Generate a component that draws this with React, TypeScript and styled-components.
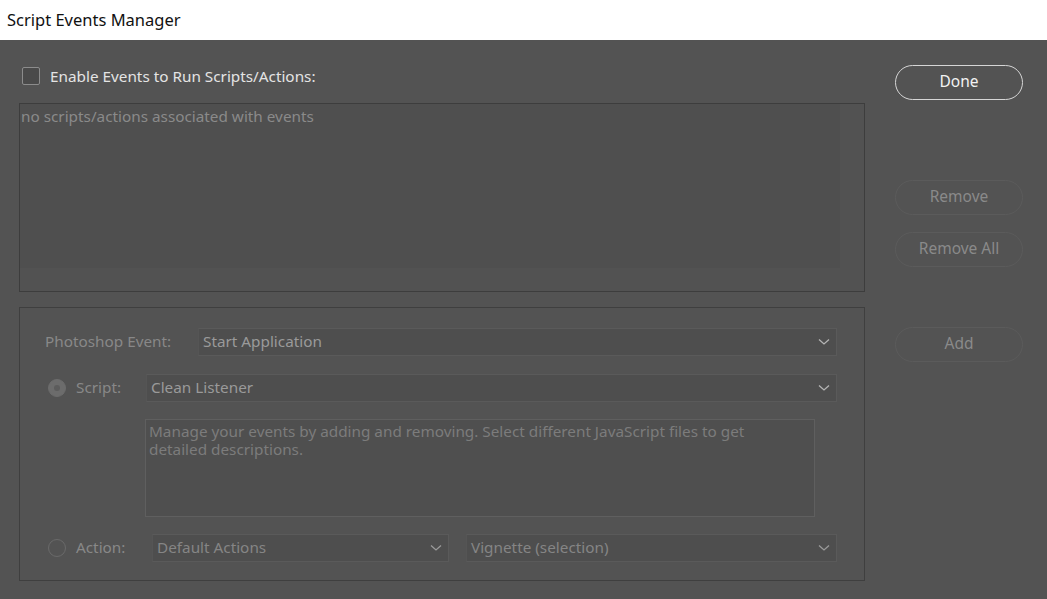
import { ReactNode } from "react";
import styled, { createGlobalStyle } from "styled-components";

const GlobalStyle = createGlobalStyle`
    html, body {
        margin: 0;
        padding: 0;
        background: #535353;
    }
    body {
        font-family: "Noto Sans", "Open Sans", sans-serif;
    }
`

const Window = styled.div`
    width: 1047px;
    height: 599px;
    display: flex;
    flex-direction: column;
    overflow: hidden;
`

const TitleBar = styled.div`
    height: 40px;
    flex: none;
    background: #ffffff;
    color: #111111;
    font-size: 16.5px;
    display: flex;
    align-items: center;
    padding-left: 7px;
    padding-bottom: 2px;
    box-sizing: border-box;
`

const Body = styled.div`
    flex: 1;
    display: flex;
    background: #535353;
    padding: 24px 0 0 19px;
`

const MainColumn = styled.div`
    width: 846px;
    display: flex;
    flex-direction: column;
`

const SideColumn = styled.div`
    width: 128px;
    margin-left: 30px;
    padding-top: 1px;
    display: flex;
    flex-direction: column;
`

const CheckRow = styled.label`
    height: 24px;
    display: flex;
    align-items: center;
    gap: 10px;
    padding-left: 3px;
    color: #e4e4e4;
    font-size: 15.3px;
    margin-bottom: 15px;
`

const CheckBox = styled.span`
    width: 16px;
    height: 16px;
    border: 1.5px solid #8c8c8c;
    border-radius: 2px;
    background: #4a4a4a;
`

const ListBox = styled.div`
    height: 189px;
    box-sizing: border-box;
    border: 1px solid #3d3d3d;
    background: #4f4f4f;
    display: grid;
    grid-template-columns: 1fr 24px;
    grid-template-rows: 1fr 23px;
`

const ListText = styled.div`
    color: #8a8a8a;
    font-size: 15.3px;
    padding: 2px 0 0 1px;
`

const ScrollStrip = styled.div<{ $wide?: boolean }>`
    background: #525252;
    grid-column: ${p => p.$wide ? "1 / span 2" : "auto"};
`

const GroupBox = styled.div`
    margin-top: 15px;
    height: 274px;
    box-sizing: border-box;
    border: 1px solid #3f3f3f;
    padding: 20px 27px 0 25px;
    display: flex;
    flex-direction: column;
`

const FormRow = styled.div<{ $gap?: number }>`
    display: flex;
    align-items: center;
    height: 28px;
    margin-bottom: ${p => p.$gap ?? 0}px;
`

const FieldLabel = styled.div<{ $width: number }>`
    width: ${p => p.$width}px;
    flex: none;
    display: flex;
    align-items: center;
    gap: 9px;
    color: #888888;
    font-size: 15.3px;
    padding-bottom: 2px;
`

const Radio = styled.span<{ $checked?: boolean }>`
    width: 18px;
    height: 18px;
    border-radius: 50%;
    box-sizing: border-box;
    border: 1.5px solid ${p => p.$checked ? "#6c6c6c" : "#6a6a6a"};
    background: ${p => p.$checked ? "#6c6c6c" : "transparent"};
    display: flex;
    align-items: center;
    justify-content: center;
    margin: 2px 1px 0 3px;
    &::after {
        content: "";
        width: 6px;
        height: 6px;
        border-radius: 50%;
        background: ${p => p.$checked ? "#5c5c5c" : "transparent"};
    }
`

const SelectBox = styled.div<{ $width?: number; $dim?: boolean }>`
    height: 28px;
    box-sizing: border-box;
    ${p => p.$width ? `width: ${p.$width}px; flex: none;` : "flex: 1;"}
    background: #4e4e4e;
    border: 1px solid #5a5a5a;
    border-left-color: #555555;
    display: flex;
    align-items: center;
    justify-content: space-between;
    padding: 0 6px 2px 4px;
    color: ${p => p.$dim ? "#858585" : "#9a9a9a"};
    font-size: 15.3px;

    svg {
        margin-top: 2px;
    }
`

const Chevron = ({ color }: { color: string }) => (
    <svg width="12" height="8" viewBox="0 0 12 8">
        <path d="M1 1.5 L6 6 L11 1.5" fill="none" stroke={color} strokeWidth="1.3" />
    </svg>
);

const Select = ({ children, width, dim }: { children: ReactNode; width?: number; dim?: boolean }) => (
    <SelectBox $width={width} $dim={dim}>
        <span>{children}</span>
        <Chevron color={dim ? "#9a9a9a" : "#b4b4b4"} />
    </SelectBox>
);

const DescriptionBox = styled.div`
    margin-left: 100px;
    width: 670px;
    height: 98px;
    box-sizing: border-box;
    border: 1px solid #5f5f5f;
    background: #4f4f4f;
    color: #7c7c7c;
    font-size: 15.3px;
    line-height: 18px;
    padding: 2px 60px 0 3px;
    margin-bottom: 17px;
`

const PillButton = styled.button<{ $primary?: boolean; $gap?: number }>`
    height: 35px;
    width: 128px;
    flex: none;
    margin-top: ${p => p.$gap ?? 0}px;
    border-radius: 18px;
    background: transparent;
    border: ${p => p.$primary ? "1.5px solid #d6d6d6" : "1px solid #5b5b5b"};
    color: ${p => p.$primary ? "#f2f2f2" : "#8a8a8a"};
    font-family: inherit;
    font-size: 15.5px;
    padding: 0 0 3px;
`

const App = () => {
    return (
        <>
            <GlobalStyle />
            <Window>
                <TitleBar>Script Events Manager</TitleBar>
                <Body>
                    <MainColumn>
                        <CheckRow>
                            <CheckBox />
                            Enable Events to Run Scripts/Actions:
                        </CheckRow>
                        <ListBox>
                            <ListText>no scripts/actions associated with events</ListText>
                            <ScrollStrip />
                            <ScrollStrip $wide />
                        </ListBox>
                        <GroupBox>
                            <FormRow $gap={18}>
                                <FieldLabel $width={153}>Photoshop Event:</FieldLabel>
                                <Select>Start Application</Select>
                            </FormRow>
                            <FormRow $gap={17}>
                                <FieldLabel $width={101}>
                                    <Radio $checked />
                                    Script:
                                </FieldLabel>
                                <Select>Clean Listener</Select>
                            </FormRow>
                            <DescriptionBox>
                                Manage your events by adding and removing. Select different JavaScript files to get detailed descriptions.
                            </DescriptionBox>
                            <FormRow>
                                <FieldLabel $width={107}>
                                    <Radio />
                                    Action:
                                </FieldLabel>
                                <Select width={297} dim>Default Actions</Select>
                                <div style={{ width: 17 }} />
                                <Select dim>Vignette (selection)</Select>
                            </FormRow>
                        </GroupBox>
                    </MainColumn>
                    <SideColumn>
                        <PillButton $primary>Done</PillButton>
                        <PillButton $gap={80}>Remove</PillButton>
                        <PillButton $gap={17}>Remove All</PillButton>
                        <PillButton $gap={60}>Add</PillButton>
                    </SideColumn>
                </Body>
            </Window>
        </>
    );
};

export default App;
